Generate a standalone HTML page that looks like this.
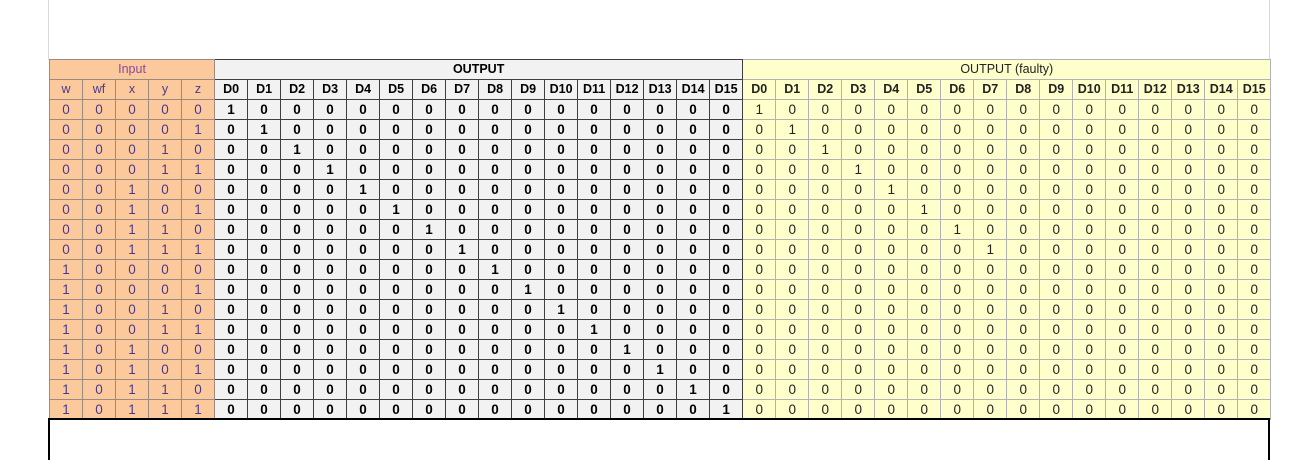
<!DOCTYPE html>
<html><head><meta charset="utf-8"><style>
html,body{margin:0;padding:0;background:#fff;width:1297px;height:446px;overflow:hidden;font-family:"Liberation Sans",Arial,sans-serif}
.vl{position:absolute;top:0;width:1px;height:60px;background:#d9d9d9}
table{position:absolute;left:49px;top:59px;border-collapse:collapse;table-layout:fixed;width:1221px}
td{height:19px;padding:0;text-align:center;font-size:13.5px;line-height:19px;overflow:hidden;white-space:nowrap}
tr.hd td{font-size:12.5px}
td:nth-child(-n+5){background:#fcc99c;color:#4b3a8a;border:1px solid #9a8a80}
td:nth-child(n+6){background:#f2f2f2;color:#000;font-weight:bold;border:1px solid #3f3f3f}
td:nth-child(n+22){background:#ffffcc;color:#222;font-weight:normal;border:1px solid #b2b2b2}
tr.h td{font-size:12.5px}
tr.h td.a{background:#fcc99c;color:#8a4aa0;font-weight:normal;border:1px solid #9a8a80}
tr.h td.b{background:#f2f2f2;color:#000;font-weight:bold;border:1px solid #3f3f3f}
tr.h td.c{background:#ffffcc;color:#222;font-weight:normal;border:1px solid #b2b2b2}
.bot{position:absolute;left:48px;top:418px;width:1218px;height:40px;border:2px solid #000;border-bottom:none}
</style></head><body>
<div class="vl" style="left:48px"></div><div class="vl" style="left:1269px"></div>
<table>
<colgroup><col span="37" style="width:33px"></colgroup>
<tr class="h"><td class="a" colspan="5">Input</td><td class="b" colspan="16">OUTPUT</td><td class="c" colspan="16">OUTPUT (faulty)</td></tr>
<tr class="hd"><td>w</td><td>wf</td><td>x</td><td>y</td><td>z</td><td>D0</td><td>D1</td><td>D2</td><td>D3</td><td>D4</td><td>D5</td><td>D6</td><td>D7</td><td>D8</td><td>D9</td><td>D10</td><td>D11</td><td>D12</td><td>D13</td><td>D14</td><td>D15</td><td style="font-weight:bold">D0</td><td style="font-weight:bold">D1</td><td style="font-weight:bold">D2</td><td style="font-weight:bold">D3</td><td style="font-weight:bold">D4</td><td style="font-weight:bold">D5</td><td style="font-weight:bold">D6</td><td style="font-weight:bold">D7</td><td style="font-weight:bold">D8</td><td style="font-weight:bold">D9</td><td style="font-weight:bold">D10</td><td style="font-weight:bold">D11</td><td style="font-weight:bold">D12</td><td style="font-weight:bold">D13</td><td style="font-weight:bold">D14</td><td style="font-weight:bold">D15</td></tr>
<tr><td>0</td><td>0</td><td>0</td><td>0</td><td>0</td><td>1</td><td>0</td><td>0</td><td>0</td><td>0</td><td>0</td><td>0</td><td>0</td><td>0</td><td>0</td><td>0</td><td>0</td><td>0</td><td>0</td><td>0</td><td>0</td><td>1</td><td>0</td><td>0</td><td>0</td><td>0</td><td>0</td><td>0</td><td>0</td><td>0</td><td>0</td><td>0</td><td>0</td><td>0</td><td>0</td><td>0</td><td>0</td></tr>
<tr><td>0</td><td>0</td><td>0</td><td>0</td><td>1</td><td>0</td><td>1</td><td>0</td><td>0</td><td>0</td><td>0</td><td>0</td><td>0</td><td>0</td><td>0</td><td>0</td><td>0</td><td>0</td><td>0</td><td>0</td><td>0</td><td>0</td><td>1</td><td>0</td><td>0</td><td>0</td><td>0</td><td>0</td><td>0</td><td>0</td><td>0</td><td>0</td><td>0</td><td>0</td><td>0</td><td>0</td><td>0</td></tr>
<tr><td>0</td><td>0</td><td>0</td><td>1</td><td>0</td><td>0</td><td>0</td><td>1</td><td>0</td><td>0</td><td>0</td><td>0</td><td>0</td><td>0</td><td>0</td><td>0</td><td>0</td><td>0</td><td>0</td><td>0</td><td>0</td><td>0</td><td>0</td><td>1</td><td>0</td><td>0</td><td>0</td><td>0</td><td>0</td><td>0</td><td>0</td><td>0</td><td>0</td><td>0</td><td>0</td><td>0</td><td>0</td></tr>
<tr><td>0</td><td>0</td><td>0</td><td>1</td><td>1</td><td>0</td><td>0</td><td>0</td><td>1</td><td>0</td><td>0</td><td>0</td><td>0</td><td>0</td><td>0</td><td>0</td><td>0</td><td>0</td><td>0</td><td>0</td><td>0</td><td>0</td><td>0</td><td>0</td><td>1</td><td>0</td><td>0</td><td>0</td><td>0</td><td>0</td><td>0</td><td>0</td><td>0</td><td>0</td><td>0</td><td>0</td><td>0</td></tr>
<tr><td>0</td><td>0</td><td>1</td><td>0</td><td>0</td><td>0</td><td>0</td><td>0</td><td>0</td><td>1</td><td>0</td><td>0</td><td>0</td><td>0</td><td>0</td><td>0</td><td>0</td><td>0</td><td>0</td><td>0</td><td>0</td><td>0</td><td>0</td><td>0</td><td>0</td><td>1</td><td>0</td><td>0</td><td>0</td><td>0</td><td>0</td><td>0</td><td>0</td><td>0</td><td>0</td><td>0</td><td>0</td></tr>
<tr><td>0</td><td>0</td><td>1</td><td>0</td><td>1</td><td>0</td><td>0</td><td>0</td><td>0</td><td>0</td><td>1</td><td>0</td><td>0</td><td>0</td><td>0</td><td>0</td><td>0</td><td>0</td><td>0</td><td>0</td><td>0</td><td>0</td><td>0</td><td>0</td><td>0</td><td>0</td><td>1</td><td>0</td><td>0</td><td>0</td><td>0</td><td>0</td><td>0</td><td>0</td><td>0</td><td>0</td><td>0</td></tr>
<tr><td>0</td><td>0</td><td>1</td><td>1</td><td>0</td><td>0</td><td>0</td><td>0</td><td>0</td><td>0</td><td>0</td><td>1</td><td>0</td><td>0</td><td>0</td><td>0</td><td>0</td><td>0</td><td>0</td><td>0</td><td>0</td><td>0</td><td>0</td><td>0</td><td>0</td><td>0</td><td>0</td><td>1</td><td>0</td><td>0</td><td>0</td><td>0</td><td>0</td><td>0</td><td>0</td><td>0</td><td>0</td></tr>
<tr><td>0</td><td>0</td><td>1</td><td>1</td><td>1</td><td>0</td><td>0</td><td>0</td><td>0</td><td>0</td><td>0</td><td>0</td><td>1</td><td>0</td><td>0</td><td>0</td><td>0</td><td>0</td><td>0</td><td>0</td><td>0</td><td>0</td><td>0</td><td>0</td><td>0</td><td>0</td><td>0</td><td>0</td><td>1</td><td>0</td><td>0</td><td>0</td><td>0</td><td>0</td><td>0</td><td>0</td><td>0</td></tr>
<tr><td>1</td><td>0</td><td>0</td><td>0</td><td>0</td><td>0</td><td>0</td><td>0</td><td>0</td><td>0</td><td>0</td><td>0</td><td>0</td><td>1</td><td>0</td><td>0</td><td>0</td><td>0</td><td>0</td><td>0</td><td>0</td><td>0</td><td>0</td><td>0</td><td>0</td><td>0</td><td>0</td><td>0</td><td>0</td><td>0</td><td>0</td><td>0</td><td>0</td><td>0</td><td>0</td><td>0</td><td>0</td></tr>
<tr><td>1</td><td>0</td><td>0</td><td>0</td><td>1</td><td>0</td><td>0</td><td>0</td><td>0</td><td>0</td><td>0</td><td>0</td><td>0</td><td>0</td><td>1</td><td>0</td><td>0</td><td>0</td><td>0</td><td>0</td><td>0</td><td>0</td><td>0</td><td>0</td><td>0</td><td>0</td><td>0</td><td>0</td><td>0</td><td>0</td><td>0</td><td>0</td><td>0</td><td>0</td><td>0</td><td>0</td><td>0</td></tr>
<tr><td>1</td><td>0</td><td>0</td><td>1</td><td>0</td><td>0</td><td>0</td><td>0</td><td>0</td><td>0</td><td>0</td><td>0</td><td>0</td><td>0</td><td>0</td><td>1</td><td>0</td><td>0</td><td>0</td><td>0</td><td>0</td><td>0</td><td>0</td><td>0</td><td>0</td><td>0</td><td>0</td><td>0</td><td>0</td><td>0</td><td>0</td><td>0</td><td>0</td><td>0</td><td>0</td><td>0</td><td>0</td></tr>
<tr><td>1</td><td>0</td><td>0</td><td>1</td><td>1</td><td>0</td><td>0</td><td>0</td><td>0</td><td>0</td><td>0</td><td>0</td><td>0</td><td>0</td><td>0</td><td>0</td><td>1</td><td>0</td><td>0</td><td>0</td><td>0</td><td>0</td><td>0</td><td>0</td><td>0</td><td>0</td><td>0</td><td>0</td><td>0</td><td>0</td><td>0</td><td>0</td><td>0</td><td>0</td><td>0</td><td>0</td><td>0</td></tr>
<tr><td>1</td><td>0</td><td>1</td><td>0</td><td>0</td><td>0</td><td>0</td><td>0</td><td>0</td><td>0</td><td>0</td><td>0</td><td>0</td><td>0</td><td>0</td><td>0</td><td>0</td><td>1</td><td>0</td><td>0</td><td>0</td><td>0</td><td>0</td><td>0</td><td>0</td><td>0</td><td>0</td><td>0</td><td>0</td><td>0</td><td>0</td><td>0</td><td>0</td><td>0</td><td>0</td><td>0</td><td>0</td></tr>
<tr><td>1</td><td>0</td><td>1</td><td>0</td><td>1</td><td>0</td><td>0</td><td>0</td><td>0</td><td>0</td><td>0</td><td>0</td><td>0</td><td>0</td><td>0</td><td>0</td><td>0</td><td>0</td><td>1</td><td>0</td><td>0</td><td>0</td><td>0</td><td>0</td><td>0</td><td>0</td><td>0</td><td>0</td><td>0</td><td>0</td><td>0</td><td>0</td><td>0</td><td>0</td><td>0</td><td>0</td><td>0</td></tr>
<tr><td>1</td><td>0</td><td>1</td><td>1</td><td>0</td><td>0</td><td>0</td><td>0</td><td>0</td><td>0</td><td>0</td><td>0</td><td>0</td><td>0</td><td>0</td><td>0</td><td>0</td><td>0</td><td>0</td><td>1</td><td>0</td><td>0</td><td>0</td><td>0</td><td>0</td><td>0</td><td>0</td><td>0</td><td>0</td><td>0</td><td>0</td><td>0</td><td>0</td><td>0</td><td>0</td><td>0</td><td>0</td></tr>
<tr><td>1</td><td>0</td><td>1</td><td>1</td><td>1</td><td>0</td><td>0</td><td>0</td><td>0</td><td>0</td><td>0</td><td>0</td><td>0</td><td>0</td><td>0</td><td>0</td><td>0</td><td>0</td><td>0</td><td>0</td><td>1</td><td>0</td><td>0</td><td>0</td><td>0</td><td>0</td><td>0</td><td>0</td><td>0</td><td>0</td><td>0</td><td>0</td><td>0</td><td>0</td><td>0</td><td>0</td><td>0</td></tr>
</table>
<div class="bot"></div>
</body></html>
